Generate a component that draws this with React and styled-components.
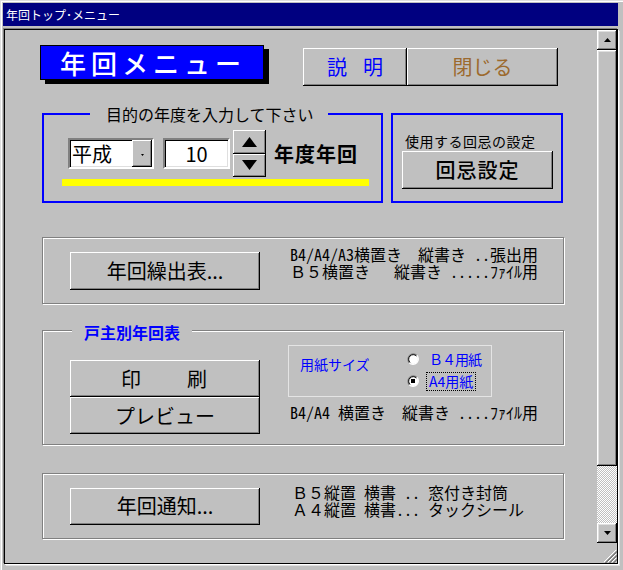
import React from 'react';
import styled, { createGlobalStyle } from 'styled-components';

const GlobalStyle = createGlobalStyle`
  html, body { margin: 0; padding: 0; background: #c0c0c0; }
  body { font-family: "Noto Sans CJK JP", "Noto Sans", sans-serif; color: #000; }
  * { box-sizing: border-box; }
`;

const Window = styled.div`
  width: 623px;
  height: 570px;
  background: #c0c0c0;
  padding: 3px 5px 6px 4px;
  display: flex;
  flex-direction: column;
  box-shadow: inset 1px 1px #dfdfdf, inset 2px 2px #fff;
`;

const TitleBar = styled.div`
  height: 23px;
  margin-left: -1px;
  background: #000080;
  color: #fff;
  font-size: 12px;
  line-height: 23px;
  padding-left: 3px;
  white-space: nowrap;
`;

const Client = styled.div`
  flex: 1;
  margin-top: 3px;
  border: 1px solid #000;
  box-shadow: -1px -1px 0 #808080, 1px 1px 0 #fff, 2px 2px 0 #dfdfdf;
  display: flex;
  min-height: 0;
`;

const Content = styled.div`
  flex: 1;
  padding: 15px 0 0 37px;
  display: flex;
  flex-direction: column;
`;

const Header = styled.div`
  display: flex;
  align-items: flex-start;
`;

const Logo = styled.div`
  width: 224px;
  height: 35px;
  margin-left: -2px;
  background: #0000ff;
  border: 1px solid #000;
  box-shadow: 5px 4px 0 #000;
  color: #fff;
  font-size: 26px;
  font-weight: 500;
  letter-spacing: 5px;
  padding-left: 2px;
  display: flex;
  align-items: center;
  justify-content: center;
`;

const HeaderButtons = styled.div`
  display: flex;
  margin: 3px 0 0 39px;
`;

const Button = styled.button`
  width: ${p => p.$w}px;
  height: ${p => p.$h}px;
  padding: 0;
  border: 0;
  background: #c0c0c0;
  box-shadow: inset -1px -1px #000, inset 1px 1px #fff, inset -2px -2px #808080;
  font-family: inherit;
  font-size: ${p => p.$size || 20}px;
  font-weight: ${p => p.$weight || 400};
  color: ${p => p.$color || '#000'};
  letter-spacing: ${p => p.$ls || 0}px;
  line-height: 1;
  display: flex;
  align-items: center;
  justify-content: center;
  gap: ${p => p.$gap || 0}px;
  flex-shrink: 0;
  cursor: default;
`;

const GroupRow = styled.div`
  display: flex;
  margin-top: 27px;
`;

const BlueGroup = styled.div`
  position: relative;
  width: ${p => p.$w}px;
  height: 90px;
  margin-left: ${p => p.$ml || 0}px;
  border: 2px solid #0000ff;
  padding-top: ${p => p.$pt}px;
`;

const Legend = styled.div`
  position: absolute;
  top: ${p => p.$top}px;
  left: ${p => p.$left}px;
  padding: 0 ${p => p.$pr}px 0 ${p => p.$pl}px;
  background: #c0c0c0;
  font-size: 16px;
  line-height: 18px;
  font-weight: ${p => p.$weight || 400};
  color: ${p => p.$color || '#000'};
  white-space: nowrap;
`;

const ControlRow = styled.div`
  display: flex;
  align-items: center;
  padding-left: 24px;
`;

const Field = styled.div`
  width: ${p => p.$w}px;
  height: 31px;
  margin-left: ${p => p.$ml || 0}px;
  background: #fff;
  border: 2px solid;
  border-color: #808080 #fff #fff #808080;
  box-shadow: inset 1px 1px #000, inset -1px -1px #dfdfdf;
  display: flex;
  align-items: center;
  justify-content: ${p => p.$center ? 'center' : 'flex-start'};
  font-size: 20px;
  line-height: 1;
  padding-left: ${p => p.$center ? 0 : 2}px;
`;

const FieldText = styled.span`
  flex: 1;
`;

const DropButton = styled.div`
  width: 20px;
  height: 100%;
  background: #c0c0c0;
  box-shadow: inset -1px -1px #000, inset 1px 1px #fff, inset -2px -2px #808080;
  display: flex;
  align-items: center;
  justify-content: center;
  padding-top: 2px;
`;

const Spin = styled.div`
  width: 33px;
  height: 47px;
  margin-left: 3px;
  display: flex;
  flex-direction: column;
`;

const SpinButton = styled.div`
  flex: 1;
  background: #c0c0c0;
  box-shadow: inset -1px -1px #000, inset 1px 1px #fff, inset -2px -2px #808080;
  display: flex;
  align-items: center;
  justify-content: center;
`;

const YearLabel = styled.span`
  margin-left: 8px;
  font-size: 20px;
  font-weight: 700;
  letter-spacing: 1px;
`;

const YellowBar = styled.div`
  width: 307px;
  height: 7px;
  margin: 2px 0 0 18px;
  background: #ffff00;
`;

const SmallCaption = styled.div`
  margin-left: 12px;
  font-size: 14px;
  line-height: 16px;
  letter-spacing: 0.5px;
`;

const Panel = styled.div`
  position: relative;
  width: 522px;
  height: ${p => p.$h}px;
  margin-top: ${p => p.$mt}px;
  border: 1px solid #808080;
  box-shadow: inset 1px 1px #fff, 1px 1px 0 #fff;
  display: flex;
  align-items: ${p => p.$align || 'center'};
  padding-left: 27px;
`;

const InfoText = styled.div`
  margin-left: ${p => p.$ml}px;
  margin-top: ${p => p.$mt || 0}px;
  margin-bottom: ${p => p.$mb || 0}px;
  font-family: "Noto Sans Mono CJK JP", "Noto Sans CJK JP", monospace;
  font-size: 16px;
  line-height: 17px;
  white-space: pre;
`;

const ButtonStack = styled.div`
  display: flex;
  flex-direction: column;
  margin-top: 29px;
`;

const PaperColumn = styled.div`
  display: flex;
  flex-direction: column;
  margin: 14px 0 0 28px;
`;

const PaperBox = styled.div`
  width: 204px;
  height: 52px;
  border: 1px solid #e4e4e4;
  display: flex;
  padding: 2px 0 0 11px;
  color: #0000ff;
`;

const PaperLabel = styled.div`
  width: 107px;
  margin-top: 7px;
  font-size: 14px;
  line-height: 18px;
`;

const RadioList = styled.div`
  display: flex;
  flex-direction: column;
`;

const RadioRow = styled.div`
  height: 22px;
  display: flex;
  align-items: center;
`;

const RadioLabel = styled.span`
  margin-left: 7px;
  padding: 0 2px;
  height: 19px;
  display: flex;
  align-items: center;
  font-size: 14px;
  letter-spacing: ${p => p.$ls || 0}px;
  border: 1px dotted ${p => p.$focus ? '#000' : 'transparent'};
`;

const Scrollbar = styled.div`
  width: 20px;
  display: flex;
  flex-direction: column;
`;

const ScrollArrow = styled.div`
  height: 20px;
  background: #c0c0c0;
  box-shadow: inset -1px -1px #000, inset 1px 1px #fff, inset -2px -2px #808080, inset 2px 2px #dfdfdf;
  display: flex;
  align-items: center;
  justify-content: center;
`;

const Thumb = styled.div`
  height: 416px;
  background: #c0c0c0;
  box-shadow: inset -1px -1px #000, inset 1px 1px #fff, inset -2px -2px #808080, inset 2px 2px #dfdfdf;
`;

const Track = styled.div`
  flex: 1;
  background-color: #c0c0c0;
  background-image: conic-gradient(#fff 25%, #c0c0c0 0 50%, #fff 0 75%, #c0c0c0 0);
  background-size: 2px 2px;
`;

const Grip = styled.div`
  height: 20px;
  display: flex;
  align-items: flex-end;
  justify-content: flex-end;
`;

const Triangle = ({ dir = 'up', w = 7, h = 4 }) => (
  <svg width={w} height={h} viewBox={`0 0 ${w} ${h}`}>
    <polygon
      points={dir === 'up' ? `0,${h} ${w},${h} ${w / 2},0` : `0,0 ${w},0 ${w / 2},${h}`}
      fill="#000"
    />
  </svg>
);

const Radio = ({ checked }) => (
  <svg width="12" height="12" viewBox="0 0 12 12">
    <circle cx="6" cy="6" r="5" fill="#fff" />
    <path d="M10,2.5 A5,5 0 0 0 2.5,10" stroke="#808080" strokeWidth="1.2" fill="none" />
    <path d="M9.5,3 A4.2,4.2 0 0 0 3,9.5" stroke="#000" strokeWidth="1" fill="none" />
    <path d="M2.2,9.8 A5.3,5.3 0 0 0 9.8,2.2" stroke="#fff" strokeWidth="1.2" fill="none" />
    {checked && <rect x="4" y="4" width="4" height="4" fill="#000" />}
  </svg>
);

const SizeGrip = () => (
  <svg width="14" height="14" viewBox="0 0 14 14">
    <line x1="13" y1="1" x2="1" y2="13" stroke="#fff" />
    <line x1="14" y1="2" x2="2" y2="14" stroke="#808080" />
    <line x1="14" y1="3" x2="3" y2="14" stroke="#808080" />
    <line x1="13" y1="5" x2="5" y2="13" stroke="#fff" />
    <line x1="14" y1="6" x2="6" y2="14" stroke="#808080" />
    <line x1="14" y1="7" x2="7" y2="14" stroke="#808080" />
    <line x1="13" y1="9" x2="9" y2="13" stroke="#fff" />
    <line x1="14" y1="10" x2="10" y2="14" stroke="#808080" />
    <line x1="14" y1="11" x2="11" y2="14" stroke="#808080" />
  </svg>
);

// half-width space
const h = '\u2002';

export default function App() {
  return (
    <>
      <GlobalStyle />
      <Window>
        <TitleBar>年回トップ･メニュー</TitleBar>
        <Client>
          <Content>
            <Header>
              <Logo>年回メニュー</Logo>
              <HeaderButtons>
                <Button $w={104} $h={38} $color="#0000ff" $gap={16}>
                  <span>説</span>
                  <span>明</span>
                </Button>
                <Button $w={151} $h={38} $color="#9c6a2e">閉じる</Button>
              </HeaderButtons>
            </Header>

            <GroupRow>
              <BlueGroup $w={341} $pt={15}>
                <Legend $top={-10} $left={46} $pl={16} $pr={14}>目的の年度を入力して下さい</Legend>
                <ControlRow>
                  <Field $w={86}>
                    <FieldText>平成</FieldText>
                    <DropButton>
                      <Triangle dir="down" w={3} h={2} />
                    </DropButton>
                  </Field>
                  <Field $w={67} $ml={9} $center>10</Field>
                  <Spin>
                    <SpinButton><Triangle dir="up" w={15} h={10} /></SpinButton>
                    <SpinButton><Triangle dir="down" w={15} h={10} /></SpinButton>
                  </Spin>
                  <YearLabel>年度年回</YearLabel>
                </ControlRow>
                <YellowBar />
              </BlueGroup>

              <BlueGroup $w={172} $ml={8} $pt={18}>
                <SmallCaption>使用する回忌の設定</SmallCaption>
                <Button $w={151} $h={38} $weight={500} $ls={1} style={{ margin: '2px 0 0 9px' }}>回忌設定</Button>
              </BlueGroup>
            </GroupRow>

            <Panel $h={67} $mt={34}>
              <Button $w={190} $h={38}>年回繰出表...</Button>
              <InfoText $ml={30} $mb={16}>
                {`B4/A4/A3横置き${h}${h}縦書き${h}..張出用\nＢ５横置き${h}${h}${h}縦書き${h}.....ﾌｧｲﾙ用`}
              </InfoText>
            </Panel>

            <Panel $h={115} $mt={26} $align="flex-start">
              <Legend $top={-8} $left={29} $pl={12} $pr={12} $color="#0000ff" $weight={700}>戸主別年回表</Legend>
              <ButtonStack>
                <Button $w={190} $h={37} $ls={2}>印　　刷</Button>
                <Button $w={190} $h={37}>プレビュー</Button>
              </ButtonStack>
              <PaperColumn>
                <PaperBox>
                  <PaperLabel>用紙サイズ</PaperLabel>
                  <RadioList>
                    <RadioRow>
                      <Radio />
                      <RadioLabel $ls={-1}>Ｂ４用紙</RadioLabel>
                    </RadioRow>
                    <RadioRow>
                      <Radio checked />
                      <RadioLabel $focus>A4用紙</RadioLabel>
                    </RadioRow>
                  </RadioList>
                </PaperBox>
                <InfoText $ml={2} $mt={7}>{`B4/A4${h}横置き${h}${h}縦書き${h}....ﾌｧｲﾙ用`}</InfoText>
              </PaperColumn>
            </Panel>

            <Panel $h={66} $mt={28}>
              <Button $w={190} $h={37}>年回通知...</Button>
              <InfoText $ml={32} $mb={10}>
                {`Ｂ５縦置${h}横書${h}..${h}窓付き封筒\nＡ４縦置${h}横書...${h}タックシール`}
              </InfoText>
            </Panel>
          </Content>

          <Scrollbar>
            <ScrollArrow><Triangle dir="up" /></ScrollArrow>
            <Thumb />
            <Track />
            <ScrollArrow><Triangle dir="down" /></ScrollArrow>
            <Grip><SizeGrip /></Grip>
          </Scrollbar>
        </Client>
      </Window>
    </>
  );
}
